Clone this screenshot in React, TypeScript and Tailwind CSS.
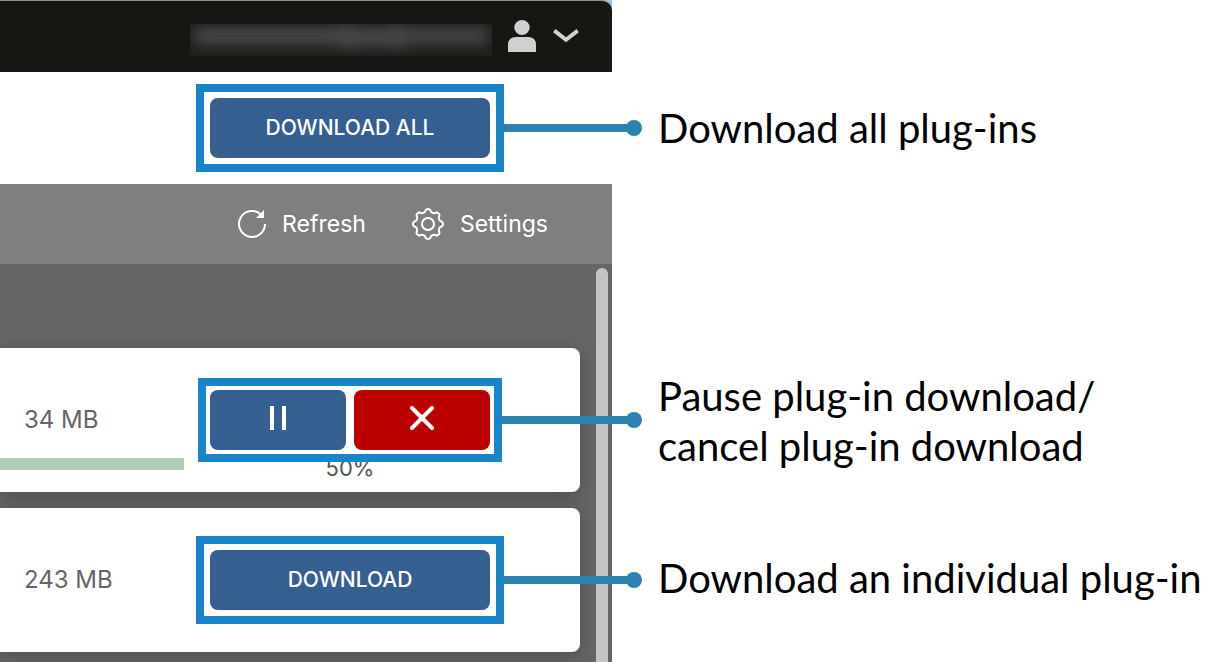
import type { ReactNode } from "react";

function Callout({ inset, children }: { inset: string; children: ReactNode }) {
  return (
    <div className="relative z-10 w-[280px] shrink-0">
      <div className={`pointer-events-none absolute ${inset} z-10 border-8 border-[#1785c7]`} />
      <div className="absolute top-1/2 left-[292px] z-10 h-2 w-[132px] -translate-y-1/2 bg-[#2b83ad]">
        <span className="absolute -top-1 -right-2 block size-4 rounded-full bg-[#2b83ad]" />
      </div>
      {children}
    </div>
  );
}

function PrimaryButton({ children }: { children: ReactNode }) {
  return (
    <button
      type="button"
      className="block h-[60px] w-full rounded-lg bg-[#355f91] text-[21px] leading-8 font-medium text-white"
    >
      {children}
    </button>
  );
}

function UserIcon() {
  return (
    <svg viewBox="0 0 28 32" className="h-8 w-7" fill="#d0d0d0" aria-hidden="true">
      <ellipse cx="14" cy="7.5" rx="7.7" ry="7.5" />
      <path d="M0 32V25Q0 17 8 17H20Q28 17 28 25V32Z" />
    </svg>
  );
}

function ChevronIcon() {
  return (
    <svg viewBox="0 0 26 14" className="h-3.5 w-[26px]" fill="none" stroke="#d0d0d0" strokeWidth="4" aria-hidden="true">
      <path d="M1.300 1.600L13 10.800L24.700 1.600" />
    </svg>
  );
}

function RefreshIcon() {
  return (
    <svg viewBox="2 2 28 28" className="size-7" fill="none" aria-hidden="true">
      <path d="M29 16A13 13 0 1 1 25.200 6.800" stroke="white" strokeWidth="2" />
      <path d="M28 2V10H20Z" fill="white" />
    </svg>
  );
}

function GearIcon() {
  const points: string[] = [];
  for (let i = 0; i < 144; i += 1) {
    const angle = (i / 144) * Math.PI * 2;
    const radius = 13.5 + 1.5 * Math.tanh(1.6 * Math.cos(8 * angle));
    points.push(`${(16 + radius * Math.sin(angle)).toFixed(2)} ${(16 - radius * Math.cos(angle)).toFixed(2)}`);
  }
  return (
    <svg viewBox="0 0 32 32" className="size-8" fill="none" stroke="white" strokeWidth="2" strokeLinejoin="round" aria-hidden="true">
      <path d={`M${points.join("L")}Z`} />
      <circle cx="16" cy="16" r="6" />
    </svg>
  );
}

function ToolbarButton({ icon, label }: { icon: ReactNode; label: string }) {
  return (
    <button type="button" className="flex items-center gap-4 text-[23px] text-white">
      {icon}
      {label}
    </button>
  );
}

function Card({ size, action, children }: { size: string; action: ReactNode; children?: ReactNode }) {
  return (
    <li className="h-36 rounded-r-lg bg-white pt-[42px] pr-[90px] shadow-[0_4px_20px_rgba(0,0,0,0.25)]">
      <div className="flex items-center justify-between pl-6">
        <span className="text-2xl text-[#666]">{size}</span>
        {action}
      </div>
      {children}
    </li>
  );
}

function Note({ children }: { children: ReactNode }) {
  return <p className="text-[40px] leading-[50px] whitespace-nowrap text-black">{children}</p>;
}

export default function App() {
  return (
    <main className="grid min-h-screen grid-cols-[612fr_606fr] bg-white font-['Inter',sans-serif]">
      <section className="flex flex-col">
        <div className="bg-[#9cc0e6]">
          <header className="flex h-[72px] items-center justify-end rounded-tr-[10px] border-t border-[#8d918f] bg-[#171613] pr-[33px] pb-px">
            <div className="mt-2 mr-4 flex h-8 w-[302px] items-start overflow-hidden bg-[#1f1e1d] px-1 pt-1" aria-hidden="true">
              <span className="h-4 flex-1 bg-[#4c4a4c] blur-[7px]" />
              <span className="-ml-3 h-[18px] w-16 bg-[#4c4a4c] blur-[7px]" />
              <span className="-ml-3 h-4 w-24 bg-[#484648] blur-[7px]" />
            </div>
            <button type="button" aria-label="Account" className="flex items-center gap-[17px]">
              <UserIcon />
              <ChevronIcon />
            </button>
          </header>
        </div>

        <div className="flex h-28 items-center justify-end pr-[122px]">
          <Callout inset="-inset-3.5">
            <PrimaryButton>DOWNLOAD ALL</PrimaryButton>
          </Callout>
        </div>

        <nav className="flex h-20 items-center justify-end gap-[46px] bg-[#7f7f7f] pr-16">
          <ToolbarButton icon={<RefreshIcon />} label="Refresh" />
          <ToolbarButton icon={<GearIcon />} label="Settings" />
        </nav>

        <div className="flex flex-1 bg-[#666] pr-1">
          <ul className="flex flex-1 flex-col gap-4 pt-[84px] pr-4 pb-2.5">
            <Card
              size="34 MB"
              action={
                <Callout inset="-inset-3">
                  <div className="flex gap-2">
                    <button type="button" aria-label="Pause" className="flex h-[60px] flex-1 items-center justify-center rounded-lg bg-[#355f91] pb-1">
                      <svg viewBox="0 0 24 24" className="size-6" fill="white" aria-hidden="true">
                        <path d="M4 0H8V24H4ZM16 0H20V24H16Z" />
                      </svg>
                    </button>
                    <button type="button" aria-label="Cancel" className="flex h-[60px] flex-1 items-center justify-center rounded-lg bg-[#bb0000] pb-1">
                      <svg viewBox="0 0 24 24" className="size-6" stroke="white" strokeWidth="4" strokeLinecap="round" aria-hidden="true">
                        <path d="M2 2L22 22M22 2L2 22" />
                      </svg>
                    </button>
                  </div>
                </Callout>
              }
            >
              <div className="mt-2 flex items-start gap-[26px]">
                <div role="progressbar" aria-valuenow={50} aria-label="Download progress" className="h-3 flex-1 bg-[#afcdb6]" />
                <span className="w-[280px] text-center text-[22px] leading-5 text-[#555]">50%</span>
              </div>
            </Card>
            <Card
              size="243 MB"
              action={
                <Callout inset="-inset-3.5">
                  <PrimaryButton>DOWNLOAD</PrimaryButton>
                </Callout>
              }
            />
          </ul>
          <div className="mt-1 w-3 rounded-t-full bg-[#c4c4c4]" />
        </div>
      </section>

      <aside className="flex flex-col pt-[103px] pl-[46px] font-['Lato',sans-serif]">
        <Note>Download all plug-ins</Note>
        <div className="mt-[218px]">
          <Note>
            Pause plug-in download/
            <br />
            cancel plug-in download
          </Note>
        </div>
        <div className="mt-[82px]">
          <Note>Download an individual plug-in</Note>
        </div>
      </aside>
    </main>
  );
}
